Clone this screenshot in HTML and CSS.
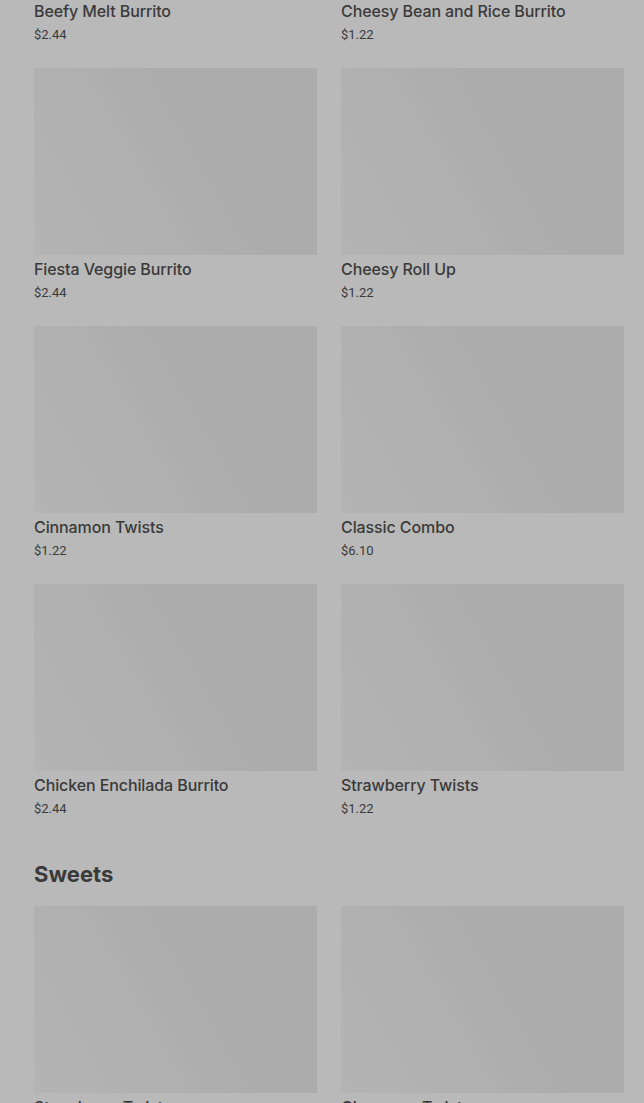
FILE: index.html
```html
<!DOCTYPE html>
<html lang="en">
<head>
    <meta charset="UTF-8">
    <meta name="viewport" content="width=device-width, initial-scale=1.0">
    <title>Menu</title>
    <link rel="stylesheet" href="styles.css">
</head>
<body>
    <main class="menu">
        <!-- Burritos (scrolled part) -->
        <section class="menu-section first">
            <div class="grid">
                <div class="card">
                    <div class="thumb"></div>
                    <h3>Beefy Melt Burrito</h3>
                    <p class="price">$2.44</p>
                </div>
                <div class="card">
                    <div class="thumb"></div>
                    <h3>Cheesy Bean and Rice Burrito</h3>
                    <p class="price">$1.22</p>
                </div>
                <div class="card">
                    <div class="thumb"></div>
                    <h3>Fiesta Veggie Burrito</h3>
                    <p class="price">$2.44</p>
                </div>
                <div class="card">
                    <div class="thumb"></div>
                    <h3>Cheesy Roll Up</h3>
                    <p class="price">$1.22</p>
                </div>
                <div class="card">
                    <div class="thumb"></div>
                    <h3>Cinnamon Twists</h3>
                    <p class="price">$1.22</p>
                </div>
                <div class="card">
                    <div class="thumb"></div>
                    <h3>Classic Combo</h3>
                    <p class="price">$6.10</p>
                </div>
                <div class="card">
                    <div class="thumb"></div>
                    <h3>Chicken Enchilada Burrito</h3>
                    <p class="price">$2.44</p>
                </div>
                <div class="card">
                    <div class="thumb"></div>
                    <h3>Strawberry Twists</h3>
                    <p class="price">$1.22</p>
                </div>
            </div>
        </section>

        <section class="menu-section">
            <h2>Sweets</h2>
            <div class="grid">
                <div class="card">
                    <div class="thumb"></div>
                    <h3>Strawberry Twists</h3>
                    <p class="price">$1.22</p>
                </div>
                <div class="card">
                    <div class="thumb"></div>
                    <h3>Cinnamon Twists</h3>
                    <p class="price">$1.22</p>
                </div>
            </div>
        </section>
    </main>
</body>
</html>
```

FILE: styles.css
```css
html, body {
    height: 100%;
    overflow: hidden;
}
body {
    font-family: Roboto, "Liberation Sans", Arial, sans-serif;
    background-color: #b9b9b9;
    margin: 0;
    padding: 0;
    color: #3a3a3a;
}
.menu {
    padding: 0 20px 0 34px;
}
.menu-section.first {
    margin-top: -190px;
}
.menu-section + .menu-section {
    margin-top: 43px;
}
.menu-section h2 {
    font-family: Inter, Roboto, sans-serif;
    font-size: 22px;
    font-weight: 700;
    line-height: 28px;
    margin: 0 0 18px;
}
.grid {
    display: grid;
    grid-template-columns: 1fr 1fr;
    column-gap: 24px;
    row-gap: 25px;
}
.thumb {
    height: 187px;
    background: linear-gradient(60deg, #b4b4b4 0%, #b0b0b0 35%, #acacac 60%, #acacac 100%);
}
.card h3 {
    font-family: Inter, Roboto, sans-serif;
    font-size: 16px;
    font-weight: 500;
    line-height: 20px;
    letter-spacing: -0.1px;
    margin: 4px 0 0;
}
.price {
    font-size: 13px;
    line-height: 16px;
    margin: 6px 0 0;
}
```
